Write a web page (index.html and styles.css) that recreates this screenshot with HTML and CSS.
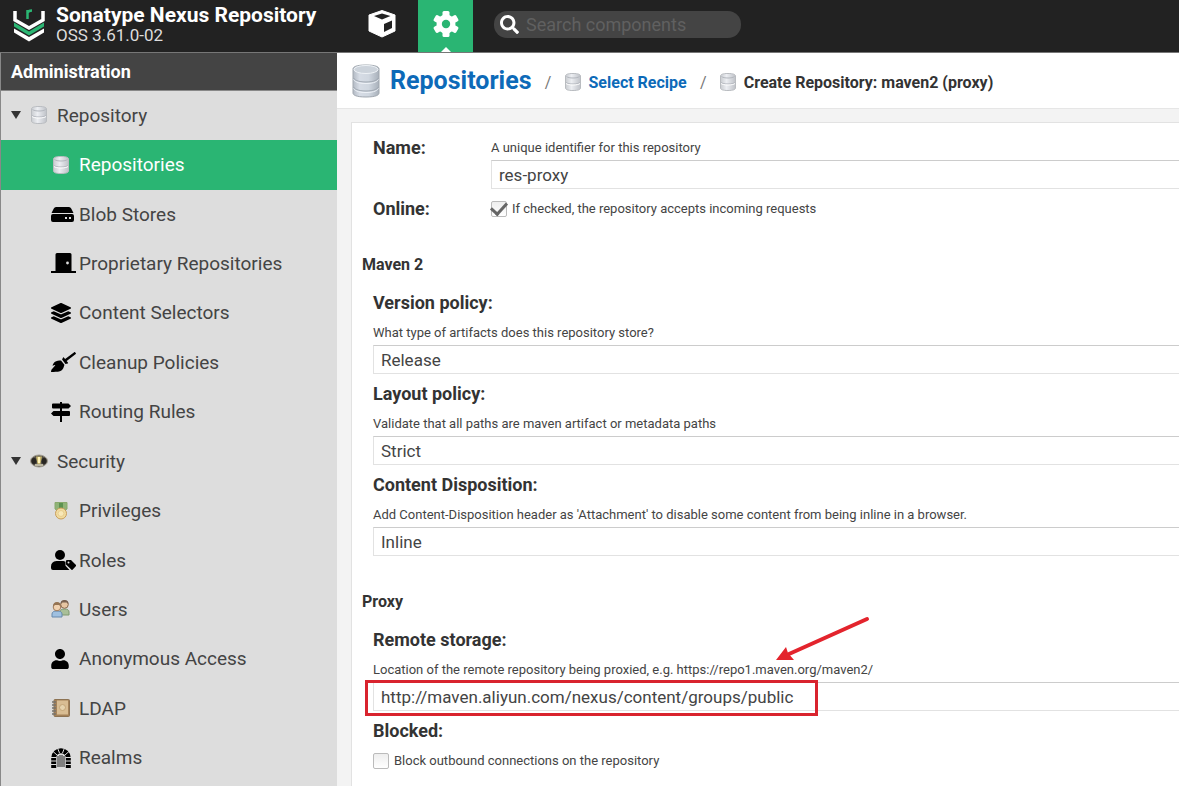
FILE: index.html
```html
<!DOCTYPE html>
<html lang="en">
<head>
<meta charset="utf-8">
<title>Sonatype Nexus Repository</title>
<link rel="stylesheet" href="styles.css">
</head>
<body>
<svg class="defs" aria-hidden="true">
  <defs>
    <linearGradient id="metal"><stop offset="0" stop-color="#b3bac4"/><stop offset=".25" stop-color="#d6dce5"/><stop offset=".6" stop-color="#d0d7e0"/><stop offset="1" stop-color="#a8b0ba"/></linearGradient>
    <linearGradient id="pale"><stop offset="0" stop-color="#c9ccd0"/><stop offset=".4" stop-color="#eceef2"/><stop offset="1" stop-color="#bfc2c8"/></linearGradient>
    <symbol id="db" viewBox="0 0 28 34">
      <path d="M1 5v24c0 2 3 4 13 4s13-2 13-4V5c0-2-3-4-13-4S1 3 1 5z" fill="url(#metal)" stroke="#a0a7af"/>
      <ellipse cx="14" cy="5.500" rx="12" ry="4" fill="#ccd3db" stroke="#eef2f6"/>
      <path d="M1.500 14c2 3 7 4 12.500 4s10.500-1 12.500-4M1.500 23c2 3 7 4 12.500 4s10.500-1 12.500-4" fill="none" stroke="#a0a8b2"/>
      <path d="M1.500 15.500c2 3 7 4 12.500 4s10.500-1 12.500-4M1.500 24.500c2 3 7 4 12.500 4s10.500-1 12.500-4" fill="none" stroke="#eef2f7"/>
    </symbol>
    <symbol id="db-small" viewBox="0 0 16 18">
      <path d="M.500 3v12c0 1.500 2 2.500 7.500 2.500s7.500-1 7.500-2.500V3C15.500 1.500 13.500.500 8 .500S.500 1.500.500 3z" fill="url(#pale)" stroke="#b9bcc0"/>
      <path d="M1.500 3.500c2 2 11 2 13 0M1 9.500c2 2 12 2 14 0" fill="none" stroke="#b3b7be"/>
      <path d="M1 10.500c2 2 12 2 14 0" fill="none" stroke="#fff"/>
    </symbol>
  </defs>
</svg>

<header class="topbar">
  <div class="brand">
    <svg class="brand-logo" viewBox="0 0 32 34" aria-hidden="true">
      <path d="M2 3v9l14 8 14-8V3" fill="none" stroke="#fff" stroke-width="3.500"/>
      <path d="M1 14.500l15 9 15-9v4l-15 9-15-9z" fill="#2bb673"/>
      <path d="M1 20.500l15 8.500 15-8.500v4L16 33.500 1 24.500z" fill="#fff"/>
      <path d="M14.500 11V2M14.500 5c.500-2 2-2.500 4.500-2.500" fill="none" stroke="#2bb673" stroke-width="2.500"/>
    </svg>
    <div class="brand-text">
      <div class="brand-name">Sonatype Nexus Repository</div>
      <div class="brand-version">OSS 3.61.0-02</div>
    </div>
  </div>
  <button class="mode" type="button" aria-label="Browse">
    <svg width="28" height="28" viewBox="0 0 28 28"><path d="M14 .500L27 5v16L14 27 1 21V5z" fill="#fff" stroke="#fff" stroke-linejoin="round"/><path d="M6 6l8-2.500L22.500 6 14 9.500zM16 14l8-3.500v7.500l-8 4z" fill="#222"/></svg>
  </button>
  <button class="mode mode-active" type="button" aria-label="Administration">
    <svg width="28" height="28" viewBox="-14 -14 28 28"><g fill="#fff"><circle r="9.500"/><rect x="-3.500" y="-13" width="7" height="26" rx="1.500"/><rect x="-3.500" y="-13" width="7" height="26" rx="1.500" transform="rotate(60)"/><rect x="-3.500" y="-13" width="7" height="26" rx="1.500" transform="rotate(120)"/></g><circle r="4.200" fill="#2ab573"/></svg>
  </button>
  <label class="search">
    <svg width="19" height="19" viewBox="0 0 512 512" aria-hidden="true"><path fill="#fff" d="M505 442.700L405.300 343c-4.500-4.500-10.600-7-17-7H372c27.600-35.300 44-79.700 44-128C416 93.100 322.900 0 208 0S0 93.100 0 208s93.100 208 208 208c48.300 0 92.700-16.400 128-44v16.300c0 6.400 2.500 12.500 7 17l99.700 99.700c9.400 9.400 24.600 9.400 33.900 0l28.300-28.300c9.400-9.400 9.400-24.600.1-34zM208 336c-70.700 0-128-57.200-128-128 0-70.700 57.200-128 128-128 70.700 0 128 57.200 128 128 0 70.700-57.200 128-128 128z"/></svg>
    <input type="search" placeholder="Search components" aria-label="Search components">
  </label>
</header>

<div class="layout">
  <nav class="sidebar" aria-label="Administration">
    <h2 class="sidebar-title">Administration</h2>
    <ul class="tree">
      <li><a class="node group" href="#repository"><span class="caret"></span><svg class="icon-group"><use href="#db-small"/></svg>Repository</a></li>
      <li><a class="node leaf selected" href="#repositories" aria-current="page"><span class="icon"><svg width="20" height="18"><use href="#db-small"/></svg></span>Repositories</a></li>
      <li><a class="node leaf" href="#blobstores"><span class="icon"><svg width="23" height="20" viewBox="0 0 23 20"><path d="M5 3h13q1.500 0 2.200 1.500L22.500 9H.500l2.300-4.500Q3.500 3 5 3zM2 10h19q2 0 2 2v4q0 2-2 2H2q-2 0-2-2v-4q0-2 2-2z"/><path d="M14 13h2v2h-2zm4 0h2v2h-2z" fill="#ddd"/></svg></span>Blob Stores</a></li>
      <li><a class="node leaf" href="#proprietary"><span class="icon"><svg width="25" height="20" viewBox="0 0 25 20"><path d="M6 0h13q1.500 0 1.500 1.500V18H25v2H0v-2h4.500V1.500Q4.500 0 6 0z"/><circle cx="16.500" cy="10" r="1.400" fill="#ddd"/></svg></span>Proprietary Repositories</a></li>
      <li><a class="node leaf" href="#selectors"><span class="icon"><svg width="20" height="20" viewBox="0 0 512 512"><path d="M12.410 148.020l232.940 105.670c6.800 3.090 14.490 3.090 21.290 0l232.940-105.670c16.550-7.510 16.550-32.520 0-40.030L266.650 2.310a25.607 25.607 0 0 0-21.290 0L12.410 107.980c-16.550 7.510-16.550 32.530 0 40.040zm487.180 88.280l-58.090-26.330-161.640 73.270c-7.560 3.430-15.590 5.170-23.860 5.170s-16.290-1.740-23.860-5.170L70.510 209.970l-58.100 26.330c-16.550 7.500-16.550 32.500 0 40l232.940 105.590c6.800 3.080 14.490 3.080 21.290 0L499.590 276.300c16.550-7.500 16.550-32.500 0-40zm0 127.800l-57.870-26.230-161.860 73.370c-7.560 3.430-15.590 5.170-23.860 5.170s-16.290-1.740-23.860-5.170L70.290 337.870 12.410 364.100c-16.550 7.500-16.550 32.500 0 40l232.940 105.590c6.800 3.080 14.490 3.080 21.290 0L499.590 404.100c16.550-7.500 16.550-32.500 0-40z"/></svg></span>Content Selectors</a></li>
      <li><a class="node leaf" href="#cleanup"><span class="icon"><svg width="25" height="20" viewBox="0 0 640 512"><path d="M256.470 216.770l86.730 109.180s-16.600 102.360-76.570 150.120C206.660 523.850 0 510.190 0 510.190s3.800-23.140 11-55.430l94.620-112.170c3.970-4.700-.870-11.620-6.650-9.500l-60.400 22.090c14.440-41.660 32.720-80.040 54.600-97.470 59.970-47.760 163.300-40.940 163.300-40.940zM636.530 31.030l-19.860-25c-5.490-6.900-15.520-8.050-22.410-2.560l-232.480 177.800-34.140-42.970c-5.090-6.410-15.140-5.210-18.590 2.210l-25.330 54.550 86.730 109.180 58.800-12.450c8-1.690 11.420-11.200 6.340-17.600l-34.090-42.920 232.480-177.800c6.890-5.480 8.040-15.530 2.550-22.440z"/></svg></span>Cleanup Policies</a></li>
      <li><a class="node leaf" href="#routing"><span class="icon"><svg width="20" height="20" viewBox="0 0 20 20"><path d="M9 0h2v1.500h6.500L20 4l-2.500 2.500H11V9h7q1 0 1 1v3q0 1-1 1h-7v6H9v-6H2.500L0 11.500 2.500 9H9V6.500H2q-1 0-1-1v-3q0-1 1-1h7z"/></svg></span>Routing Rules</a></li>
      <li><a class="node group" href="#security"><span class="caret"></span><svg class="icon-group" viewBox="0 0 18 18"><ellipse cx="9" cy="9" rx="8.500" ry="6" fill="#55514a" stroke="#a29d90"/><ellipse cx="4" cy="9" rx="2.500" ry="3" fill="#282622"/><ellipse cx="14" cy="9" rx="2.500" ry="3" fill="#282622"/><path d="M6 4.500h6L10.500 12h-3z" fill="#c9b76c"/><path d="M8 5h2v6H8z" fill="#fff3b8"/><path d="M5 13h8" stroke="#ded8bf" stroke-width="1.500"/></svg>Security</a></li>
      <li><a class="node leaf" href="#privileges"><span class="icon"><svg width="20" height="20" viewBox="0 0 20 20"><path d="M4 1.500h12V8l-3 2H7L4 8z" fill="#8fb377" stroke="#88a96c"/><path d="M8 2h4v5H8z" fill="#5c9250"/><circle cx="10" cy="12.500" r="5.500" fill="#f1dca0" stroke="#c99d5a"/><circle cx="10" cy="12.500" r="3" fill="#f8e8b8" stroke="#e8cd8d"/></svg></span>Privileges</a></li>
      <li><a class="node leaf" href="#roles"><span class="icon"><svg width="25" height="20" viewBox="0 0 25 20"><circle cx="9" cy="5" r="5"/><path d="M5.500 11h7l2 .800v4l4 4.200H2q-2 0-2-2v-1.500Q0 11.500 5.500 11z"/><path d="M16 10h4l5 5q.500.500 0 1l-3.500 3.700q-.500.400-1 0L15 14.500V11q0-1 1-1z"/><circle cx="17.500" cy="12.500" r="1" fill="#ddd"/></svg></span>Roles</a></li>
      <li><a class="node leaf" href="#users"><span class="icon"><svg width="20" height="20" viewBox="0 0 20 20"><path d="M9 16v-3q0-3 4.500-3T18 13v3z" fill="#a9bf98" stroke="#7e9971"/><circle cx="13.500" cy="5.500" r="3.800" fill="#e6c5a2" stroke="#8a6a50"/><path d="M9.500 5q0-4 4-4t4 4l-2-1.500h-4z" fill="#7a6251"/><path d="M1 18v-3q0-3 5-3t5 3v3z" fill="#9fc0e0" stroke="#6689ad"/><circle cx="6" cy="8" r="3.800" fill="#f0d2b1" stroke="#a07a58"/><path d="M2 7.500Q2 3 6 3t4 4.500L8 6H4z" fill="#957453"/></svg></span>Users</a></li>
      <li><a class="node leaf" href="#anonymous"><span class="icon"><svg width="18" height="20" viewBox="0 0 448 512"><path d="M224 256c70.700 0 128-57.300 128-128S294.700 0 224 0 96 57.300 96 128s57.300 128 128 128zm89.600 32h-16.700c-22.200 10.200-46.900 16-72.900 16s-50.600-5.800-72.900-16h-16.700C60.200 288 0 348.200 0 422.400V464c0 26.500 21.500 48 48 48h352c26.500 0 48-21.500 48-48v-41.600c0-74.200-60.200-134.400-134.400-134.400z"/></svg></span>Anonymous Access</a></li>
      <li><a class="node leaf" href="#ldap"><span class="icon"><svg width="20" height="20" viewBox="0 0 20 20"><rect x="3" y="1.500" width="15.500" height="17" rx="1" fill="#a58259" stroke="#8d7353"/><rect x="6" y="2.500" width="11" height="14" fill="#d9bd93"/><circle cx="11.500" cy="9.500" r="3" fill="#e6d3ae" stroke="#c4a578"/><path d="M1 4h4M1 7h4M1 10h4M1 13h4M1 16h4" stroke="#77736c" stroke-width="1.500"/></svg></span>LDAP</a></li>
      <li><a class="node leaf" href="#realms"><span class="icon"><svg width="20" height="20" viewBox="0 0 20 20"><path d="M2.700 20V10a7.300 7.300 0 0 1 14.600 0V20" fill="none" stroke="#000" stroke-width="5"/><path d="M0 9.500h5.500M0 13h5.500M0 16.500h5.500M14.500 9.500H20M14.500 13H20M14.500 16.500H20M1.500 3l4.500 4M6.500 0l2 5M13.500 0l-2 5M18.500 3L14 7" stroke="#ddd" stroke-width="1"/><path d="M7 8v11M9 7v12M11 7v12M13 8v11" stroke="#222" stroke-width="1"/></svg></span>Realms</a></li>
    </ul>
  </nav>

  <main class="content">
    <nav class="crumbs" aria-label="Breadcrumb">
      <svg class="crumb-main-icon" aria-hidden="true"><use href="#db"/></svg>
      <a class="crumb-main" href="#repositories">Repositories</a>
      <span class="slash">/</span>
      <svg class="crumb-icon" aria-hidden="true"><use href="#db-small"/></svg>
      <a class="crumb" href="#recipe">Select Recipe</a>
      <span class="slash">/</span>
      <svg class="crumb-icon" aria-hidden="true"><use href="#db-small"/></svg>
      <span class="crumb crumb-current">Create Repository: maven2 (proxy)</span>
    </nav>

    <form class="panel">
      <div class="general">
        <label class="label" for="name">Name:</label>
        <div>
          <p class="help">A unique identifier for this repository</p>
          <input class="control" id="name" type="text" value="res-proxy">
        </div>
        <label class="label" for="online">Online:</label>
        <label class="check"><input id="online" type="checkbox" checked>If checked, the repository accepts incoming requests</label>
      </div>

      <section class="section">
        <h3 class="legend">Maven 2</h3>
        <div class="field">
          <label class="label" for="version">Version policy:</label>
          <p class="help">What type of artifacts does this repository store?</p>
          <select class="control" id="version"><option>Release</option></select>
        </div>
        <div class="field">
          <label class="label" for="policy">Layout policy:</label>
          <p class="help">Validate that all paths are maven artifact or metadata paths</p>
          <select class="control" id="policy"><option>Strict</option></select>
        </div>
        <div class="field">
          <label class="label" for="disposition">Content Disposition:</label>
          <p class="help">Add Content-Disposition header as 'Attachment' to disable some content from being inline in a browser.</p>
          <select class="control" id="disposition"><option>Inline</option></select>
        </div>
      </section>

      <section class="section">
        <h3 class="legend">Proxy</h3>
        <div class="field">
          <label class="label" for="remote">Remote storage:</label>
          <p class="help">Location of the remote repository being proxied, e.g. https://repo1.maven.org/maven2/</p>
          <input class="control" id="remote" type="text" value="http://maven.aliyun.com/nexus/content/groups/public">
          <span class="highlight"></span>
          <svg class="arrow" viewBox="0 0 96 46" aria-hidden="true"><path d="M92 3L14 38" stroke="#e3242d" stroke-width="4" stroke-linecap="round"/><path d="M1 44l10-13 2 6 6 7z" fill="#e3242d"/></svg>
        </div>
        <div class="field">
          <label class="label" for="blocked">Blocked:</label>
          <label class="check"><input id="blocked" type="checkbox">Block outbound connections on the repository</label>
        </div>
      </section>
    </form>
  </main>
</div>
</body>
</html>
```
FILE: styles.css
```css
* { box-sizing: border-box; }

body {
  margin: 0;
  min-height: 100vh;
  display: flex;
  flex-direction: column;
  background: #f3f3f3;
  color: #333;
  font-family: Roboto, "Liberation Sans", sans-serif;
}

.defs { position: absolute; width: 0; height: 0; }
h2, h3, p, ul { margin: 0; padding: 0; }
ul { list-style: none; }
a { text-decoration: none; }
button, input, select { font-family: inherit; }

.topbar {
  display: flex;
  height: 53px;
  background: #222;
  border-bottom: 1px solid #777;
}

.brand { display: flex; width: 345px; padding: 4px 0 0 13px; gap: 11px; }
.brand-logo { width: 32px; height: 34px; margin-top: 4px; }
.brand-name { color: #fff; font-size: 21px; font-weight: 700; line-height: 22px; white-space: nowrap; }
.brand-version { color: #ddd; font-size: 17px; line-height: 19px; }

.mode {
  display: flex;
  position: relative;
  justify-content: center;
  align-items: center;
  width: 55px;
  padding: 0 0 5px;
  border: 0;
  background: none;
}
.mode:first-of-type { width: 73px; }
.mode-active { background: #2ab573; }
.mode-active::after {
  content: "";
  position: absolute;
  bottom: 0;
  border: 5px solid transparent;
  border-top: 0;
  border-bottom-color: #fff;
}

.search {
  display: flex;
  align-items: center;
  gap: 7px;
  width: 247px;
  height: 27px;
  margin: 11px 0 0 21px;
  padding: 0 6px;
  border-radius: 13px;
  background: #444;
}
.search input {
  flex: 1;
  min-width: 0;
  padding: 0;
  border: 0;
  outline: 0;
  background: none;
  color: #fff;
  font-size: 18px;
}
.search input::placeholder { color: #606060; }

.layout { flex: 1; display: flex; }

.sidebar {
  display: flex;
  flex-direction: column;
  flex: 0 0 337px;
  border-left: 1px solid #888;
  background: #ddd;
}
.sidebar-title {
  padding-left: 10px;
  border-bottom: 1px solid #888;
  background: #444;
  color: #fff;
  font-size: 18px;
  font-weight: 700;
  line-height: 37px;
}
.tree { flex: 1; display: grid; grid-auto-rows: 1fr; padding-bottom: 3px; }
.node {
  display: flex;
  align-items: center;
  height: 100%;
  min-height: 48px;
  padding-bottom: 1px;
  color: #444;
  font-size: 19px;
}
.group { padding-left: 10px; }
.leaf { padding-left: 50px; }
.caret { margin-right: 9px; border: 5px solid transparent; border-top: 8px solid #333; border-bottom: 0; }
.icon-group { width: 18px; height: 18px; margin-right: 9px; }
.icon { display: flex; flex: 0 0 28px; }
.selected { background: #2ab573; color: #fff; }

.content { flex: 1; min-width: 0; display: flex; flex-direction: column; }
.crumbs {
  display: flex;
  align-items: center;
  height: 56px;
  padding-left: 14px;
  border-bottom: 1px solid #e6e6e6;
  background: #fff;
  white-space: nowrap;
}
.crumb-main-icon { width: 30px; height: 34px; margin-right: 9px; }
.crumb-main { color: #0d6ab8; font-size: 25px; font-weight: 700; }
.slash { width: 33px; padding-top: 4px; color: #777; font-size: 16px; text-align: center; }
.crumb-icon { width: 16px; height: 18px; margin: 2px 8px 0 0; }
.crumb { padding-top: 4px; color: #0d6ab8; font-size: 16px; font-weight: 700; }
.crumb-current { color: #333; }

.panel {
  flex: 1;
  margin: 13px 0 0 14px;
  padding: 15px 0 0 10px;
  border: solid #e2e2e2;
  border-width: 1px 0 0 1px;
  background: #fff;
}
.general {
  display: grid;
  grid-template-columns: 118px 1fr;
  row-gap: 10px;
  padding-left: 11px;
}
.label { color: #333; font-size: 18px; font-weight: 700; line-height: 20px; }
.help { margin-bottom: 2px; color: #444; font-size: 13px; line-height: 20px; white-space: nowrap; }
.control {
  display: block;
  width: 100%;
  height: 29px;
  padding: 0 7px;
  border: 1px solid #e2e2e2;
  border-top-color: #ccc;
  border-right: 0;
  border-radius: 0;
  outline: 0;
  appearance: none;
  background: #fff;
  color: #444;
  font-size: 17px;
}
.section { margin-top: 27px; }
.legend { font-size: 16px; font-weight: 700; line-height: 37px; }
.field { position: relative; padding-left: 11px; }
.field .label { display: block; line-height: 40px; }

.check { display: flex; align-items: center; gap: 5px; color: #444; font-size: 13px; line-height: 20px; }
.check input {
  display: grid;
  justify-items: center;
  width: 16px;
  height: 16px;
  margin: 0;
  border: 1px solid #bbb;
  border-radius: 2px;
  appearance: none;
  background: linear-gradient(#eee, #fff);
}
.check input:checked::after {
  content: "";
  width: 7px;
  height: 13px;
  margin-top: -3px;
  border: solid #666;
  border-width: 0 3px 3px 0;
  transform: rotate(42deg);
}

.highlight {
  position: absolute;
  left: 3px;
  bottom: -5px;
  width: 453px;
  height: 36px;
  border: 3px solid #d9232e;
  pointer-events: none;
}
.arrow { position: absolute; left: 413px; top: -4px; width: 96px; height: 46px; fill: none; }
```
